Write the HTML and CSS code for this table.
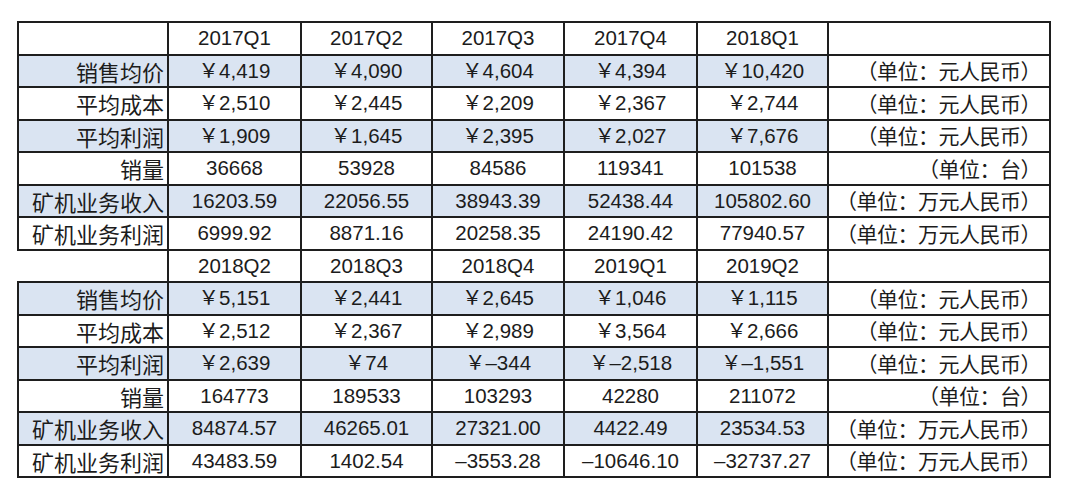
FILE: index.html
```html
<!DOCTYPE html>
<html lang="zh-CN">
<head>
<meta charset="utf-8">
<title>矿机业务数据</title>
<link rel="stylesheet" href="styles.css">
</head>
<body>
<div class="page">
<table class="grid">
<colgroup>
<col class="c-label"><col class="c-a"><col class="c-b"><col class="c-c"><col class="c-d"><col class="c-e"><col class="c-unit">
</colgroup>
<tbody>
<tr class="head"><td class="label"></td><td>2017Q1</td><td>2017Q2</td><td>2017Q3</td><td>2017Q4</td><td>2018Q1</td><td class="unit"></td></tr>
<tr class="blue"><td class="label">销售均价</td><td>￥4,419</td><td>￥4,090</td><td>￥4,604</td><td>￥4,394</td><td>￥10,420</td><td class="unit">（单位：元人民币）</td></tr>
<tr><td class="label">平均成本</td><td>￥2,510</td><td>￥2,445</td><td>￥2,209</td><td>￥2,367</td><td>￥2,744</td><td class="unit">（单位：元人民币）</td></tr>
<tr class="blue"><td class="label">平均利润</td><td>￥1,909</td><td>￥1,645</td><td>￥2,395</td><td>￥2,027</td><td>￥7,676</td><td class="unit">（单位：元人民币）</td></tr>
<tr><td class="label">销量</td><td>36668</td><td>53928</td><td>84586</td><td>119341</td><td>101538</td><td class="unit">（单位：台）</td></tr>
<tr class="blue"><td class="label">矿机业务收入</td><td>16203.59</td><td>22056.55</td><td>38943.39</td><td>52438.44</td><td>105802.60</td><td class="unit">（单位：万元人民币）</td></tr>
<tr><td class="label">矿机业务利润</td><td>6999.92</td><td>8871.16</td><td>20258.35</td><td>24190.42</td><td>77940.57</td><td class="unit">（单位：万元人民币）</td></tr>
<tr class="head"><td class="label open"></td><td>2018Q2</td><td>2018Q3</td><td>2018Q4</td><td>2019Q1</td><td>2019Q2</td><td class="unit"></td></tr>
<tr class="blue"><td class="label">销售均价</td><td>￥5,151</td><td>￥2,441</td><td>￥2,645</td><td>￥1,046</td><td>￥1,115</td><td class="unit">（单位：元人民币）</td></tr>
<tr><td class="label">平均成本</td><td>￥2,512</td><td>￥2,367</td><td>￥2,989</td><td>￥3,564</td><td>￥2,666</td><td class="unit">（单位：元人民币）</td></tr>
<tr class="blue"><td class="label">平均利润</td><td>￥2,639</td><td>￥74</td><td>￥–344</td><td>￥–2,518</td><td>￥–1,551</td><td class="unit">（单位：元人民币）</td></tr>
<tr><td class="label">销量</td><td>164773</td><td>189533</td><td>103293</td><td>42280</td><td>211072</td><td class="unit">（单位：台）</td></tr>
<tr class="blue"><td class="label">矿机业务收入</td><td>84874.57</td><td>46265.01</td><td>27321.00</td><td>4422.49</td><td>23534.53</td><td class="unit">（单位：万元人民币）</td></tr>
<tr><td class="label">矿机业务利润</td><td>43483.59</td><td>1402.54</td><td>–3553.28</td><td>–10646.10</td><td>–32737.27</td><td class="unit">（单位：万元人民币）</td></tr>
</tbody>
</table>
</div>
</body>
</html>
```

FILE: styles.css
```css
html, body {
  margin: 0;
  padding: 0;
  background: #ffffff;
}

.page {
  padding: 21px 0 0 17px;
}

.grid {
  border-collapse: collapse;
  table-layout: fixed;
  width: 1032px;
  font-family: "Liberation Sans", "Noto Sans CJK SC", sans-serif;
  font-size: 20.5px;
  color: #1c1c1c;
}

.c-label { width: 150px; }
.c-a { width: 133px; }
.c-b { width: 131px; }
.c-c { width: 132px; }
.c-d { width: 133px; }
.c-e { width: 131px; }
.c-unit { width: 222px; }

.grid tr {
  height: 32.5px;
}

.grid td {
  border: 2px solid #1e1e1e;
  padding: 0;
  text-align: center;
  vertical-align: middle;
  line-height: 1;
  white-space: nowrap;
}

.grid td.label {
  text-align: right;
  padding-right: 3px;
  font-size: 22px;
  font-family: "Noto Sans CJK SC", sans-serif;
}

.grid td.open {
  border-left: none;
}

.grid td.unit {
  text-align: right;
  padding-right: 8px;
  font-size: 21px;
  letter-spacing: -0.5px;
  font-family: "Noto Sans CJK SC", sans-serif;
  background: #ffffff;
}

.grid tr.blue td {
  background: #dae4f2;
}

.grid tr.blue td.unit {
  background: #ffffff;
}
```
